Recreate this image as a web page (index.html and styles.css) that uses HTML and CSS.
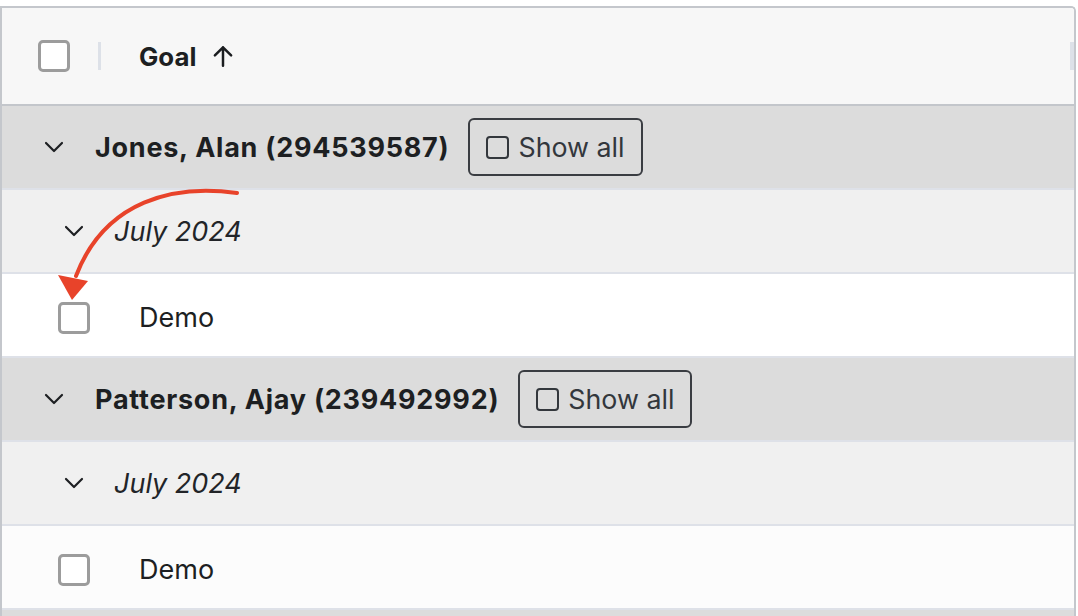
FILE: index.html
```html
<!DOCTYPE html>
<html>
<head>
<meta charset="utf-8">
<link rel="stylesheet" href="styles.css">
</head>
<body>
<div class="table">
  <div class="row header">
    <span class="checkbox"></span>
    <span class="sep"></span>
    <span class="col-title">Goal</span>
    <svg class="sort" viewBox="0 0 24 24" width="26" height="26"><path d="M12 21V4M4.5 11.5L12 4l7.5 7.5" fill="none" stroke="#1b1d20" stroke-width="2.3" stroke-linecap="round" stroke-linejoin="round"/></svg>
    <span class="handle"></span>
  </div>
  <div class="row group">
    <svg class="chev" viewBox="0 0 20 12" width="20" height="12"><path d="M2 2l8 8 8-8" fill="none" stroke="#1d1f22" stroke-width="2.2" stroke-linecap="round" stroke-linejoin="round"/></svg>
    <span class="name">Jones, Alan (294539587)</span>
    <button class="show-all"><span class="mini-box"></span>Show all</button>
  </div>
  <div class="row sub">
    <svg class="chev" viewBox="0 0 20 12" width="20" height="12"><path d="M2 2l8 8 8-8" fill="none" stroke="#1d1f22" stroke-width="2.2" stroke-linecap="round" stroke-linejoin="round"/></svg>
    <span class="period">July 2024</span>
  </div>
  <div class="row item">
    <span class="checkbox"></span>
    <span class="label">Demo</span>
  </div>
  <div class="row group">
    <svg class="chev" viewBox="0 0 20 12" width="20" height="12"><path d="M2 2l8 8 8-8" fill="none" stroke="#1d1f22" stroke-width="2.2" stroke-linecap="round" stroke-linejoin="round"/></svg>
    <span class="name">Patterson, Ajay (239492992)</span>
    <button class="show-all"><span class="mini-box"></span>Show all</button>
  </div>
  <div class="row sub">
    <svg class="chev" viewBox="0 0 20 12" width="20" height="12"><path d="M2 2l8 8 8-8" fill="none" stroke="#1d1f22" stroke-width="2.2" stroke-linecap="round" stroke-linejoin="round"/></svg>
    <span class="period">July 2024</span>
  </div>
  <div class="row item alt">
    <span class="checkbox"></span>
    <span class="label">Demo</span>
  </div>
  <div class="row group"></div>
</div>
<svg class="annot" width="260" height="320" viewBox="0 0 260 320">
  <path d="M237 193 C 175 184, 105 200, 76 276" fill="none" stroke="#e8432a" stroke-width="4" stroke-linecap="round"/>
  <polygon points="58,275 88,281 72,300" fill="#e8432a"/>
</svg>
</body>
</html>
```

FILE: styles.css
```css
* { box-sizing: border-box; }
html, body {
  margin: 0;
  padding: 0;
  background: #ffffff;
  overflow: hidden;
}
body {
  position: relative;
  width: 1078px;
  height: 616px;
  font-family: Inter, "Noto Sans", sans-serif;
  color: #1d1f22;
}
.table {
  margin-top: 6px;
  width: 1076px;
  border: 2px solid #c4c7cc;
  border-bottom: none;
  border-top-right-radius: 5px;
  overflow: hidden;
}
.row {
  display: flex;
  align-items: center;
  height: 84px;
  border-top: 2px solid #dee1e8;
}
.header {
  height: 98px;
  border-top: none;
  border-bottom: 2px solid #c3c6cb;
  background: #f7f7f7;
  padding-left: 36px;
}
.header + .row { border-top: none; height: 82px; }
.checkbox {
  width: 32px;
  height: 32px;
  border: 3px solid #9c9c9c;
  border-radius: 5px;
  background: #fff;
  flex: none;
}
.item .checkbox { margin-top: 5px; }
.sep {
  width: 3px;
  height: 28px;
  background: #dde1e8;
  margin-left: 28px;
}
.col-title {
  font-weight: 700;
  font-size: 25.8px;
  margin-left: 38px;
}
.sort { margin-left: 14px; }
.handle {
  margin-left: auto;
  width: 4px;
  height: 28px;
  background: #dde1e8;
}
.group {
  background: #dcdcdc;
  padding-left: 42px;
}
.group .chev { margin-right: 31px; }
.name {
  font-weight: 700;
  font-size: 27px;
  letter-spacing: 0.75px;
}
.show-all {
  margin-left: 19px;
  height: 58px;
  padding: 0 16px;
  display: flex;
  align-items: center;
  gap: 9px;
  border: 2px solid #3a3d42;
  border-radius: 6px;
  background: transparent;
  font-family: Inter, "Noto Sans", sans-serif;
  font-size: 26.8px;
  color: #33373c;
}
.mini-box {
  width: 23px;
  height: 23px;
  border: 2px solid #33373c;
  border-radius: 4px;
}
.sub {
  background: #f0f0f0;
  padding-left: 62px;
}
.sub .chev { margin-right: 30px; }
.period {
  font-style: italic;
  font-size: 27px;
  color: #222428;
}
.item {
  background: #ffffff;
  padding-left: 56px;
}
.item.alt { background: #fcfcfc; }
.label {
  font-size: 27px;
  margin-left: 49px;
  margin-top: 4px;
}
.annot {
  position: absolute;
  left: 0;
  top: 0;
}
```
